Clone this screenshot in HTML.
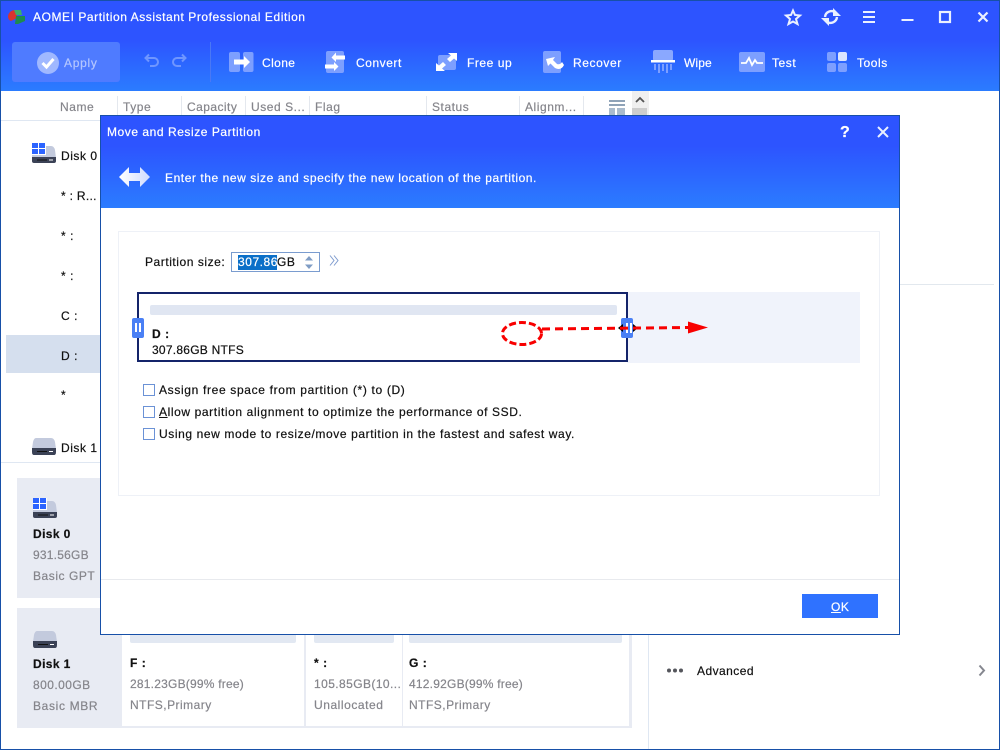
<!DOCTYPE html>
<html><head><meta charset="utf-8">
<style>
*{box-sizing:border-box}
html,body{margin:0;padding:0;width:1000px;height:750px;overflow:hidden;background:#fff}
body{font-family:"Liberation Sans",sans-serif;font-size:12px;position:relative}
.a{position:absolute}
.t{position:absolute;white-space:nowrap;line-height:14px;letter-spacing:.55px;color:#111;-webkit-text-stroke:.2px currentColor}
.w{color:#fff}
.g{color:#85858b}
.b{font-weight:bold}
.n{letter-spacing:.22px}
svg{position:absolute;overflow:visible}
</style></head><body>
<div class="a" style="left:0;top:0;width:1000px;height:750px;border:1px solid #1750a8;z-index:50;pointer-events:none"></div>
<div class="a" style="left:0;top:0;width:1000px;height:91px;background:linear-gradient(#2d54ff 0,#2d54ff 40px,#2b7cff 91px)"></div>

<svg style="left:8px;top:9px" width="18" height="16"><path d="M0 7Q1 2 6 1L9 2V9L3 12Q0 11 0 7Z" fill="#d8342f"/><path d="M6 1H13L14 6H8Z" fill="#3cae6a"/><path d="M8 7H17V12L10 15H7Z" fill="#1e8b4f"/></svg>
<div class="t w" style="left:33px;top:10px;letter-spacing:.56px">AOMEI Partition Assistant Professional Edition</div>

<svg style="left:785px;top:8px" width="215" height="20" fill="none" stroke="#eaf0ff" stroke-width="2">
<path d="M8 2.500L10 7L15 7.500L11 11L12.500 16L8 13.500L3.500 16L5 11L1 7.500L6 7Z"/>
<path d="M40 9A6.500 6.500 0 0 1 51 5M52 9A6.500 6.500 0 0 1 41 13" stroke-width="2.400"/>
<path d="M48 0V8H56ZM44 18V10H36Z" fill="#eaf0ff" stroke="none"/>
<path d="M78 4H90M78 9H90M78 14H90"/>
<path d="M116.500 12H128.500" stroke-width="2"/>
<rect x="155" y="4" width="10" height="10" stroke-width="2.200"/>
<path d="M193.500 4.500L202.500 13.500M202.500 4.500L193.500 13.500" stroke-width="2.200"/>
</svg>

<div class="a" style="left:12px;top:42px;width:108px;height:40px;background:#4f7bff;border-radius:3px"></div>
<svg style="left:37px;top:52px" width="22" height="22"><circle cx="11" cy="11" r="11" fill="#a0b8ff"/><path d="M5.500 11L9.500 15L16.500 7" fill="none" stroke="#fff" stroke-width="3"/></svg>
<div class="t" style="left:64px;top:56px;color:#b4c6ff;letter-spacing:.7px">Apply</div>
<svg style="left:144px;top:54px" width="44" height="14" fill="none" stroke="#6f96ff" stroke-width="2"><path d="M2 4H10A4 4 0 0 1 10 12H6M5 0.500L1.500 4L5 7.500"/><path d="M41 4H33A4 4 0 0 0 33 12H37M38 0.500L41.500 4L38 7.500"/></svg>
<div class="a" style="left:210px;top:42px;width:1px;height:40px;background:#4a78f5"></div>

<svg style="left:229px;top:52px" width="26" height="20"><rect width="11" height="20" rx="2" fill="#7d9fff"/><rect x="14" width="10.500" height="20" rx="2" fill="#7d9fff"/><path d="M5 7.500H15V4L21 10L15 16V12.500H5Z" fill="#fff"/></svg>
<div class="t w" style="left:262px;top:56px;letter-spacing:.4px">Clone</div>

<svg style="left:325px;top:51px" width="20" height="22"><rect x="1" width="18" height="22" rx="2" fill="#7d9fff"/><path d="M20 4.500H11V1.500L6.500 6.500L11 11V8.500H20ZM0 13.500H9V11L13.500 15.500L9 20V17.500H0Z" fill="#fff"/></svg>
<div class="t w" style="left:356px;top:56px">Convert</div>

<svg style="left:435px;top:52px" width="23" height="20"><rect x="3" y="3" width="18" height="15" rx="2" fill="#7d9fff"/><path d="M13 1H22V9L19 6.500L15 10L12 7L16 3.500ZM1 19V11L4 13.500L8 10L11 13L7 16.500L10 19Z" fill="#fff"/></svg>
<div class="t w" style="left:467px;top:56px">Free up</div>

<svg style="left:543px;top:51px" width="22" height="22"><rect width="18" height="22" rx="2" fill="#7d9fff"/><path d="M3 8L12 6L10 9L14 13Q17 14 19 11L21 14Q18 20 12 17L7.500 12.500L5 15Z" fill="#fff"/></svg>
<div class="t w" style="left:573px;top:56px;letter-spacing:.6px">Recover</div>

<svg style="left:651px;top:50px" width="24" height="24"><rect x="2" width="20" height="11" rx="2" fill="#8aa8ff"/><rect y="10" width="24" height="2.500" fill="#fff"/><path d="M3 14h2v6H3zM7 14h2v9H7zM11 14h2v7h-2zM15 14h2v9h-2zM19 14h2v6h-2z" fill="#7d9fff"/></svg>
<div class="t w" style="left:684px;top:56px;letter-spacing:.1px">Wipe</div>

<svg style="left:739px;top:52px" width="26" height="20"><rect width="26" height="20" rx="2" fill="#7d9fff"/><path d="M2 11H7L10 6L13 13L16 8L18 11H24" fill="none" stroke="#fff" stroke-width="1.800"/></svg>
<div class="t w" style="left:772px;top:56px">Test</div>

<svg style="left:827px;top:52px" width="20" height="20"><rect width="9" height="9" rx="2" fill="#7d9fff"/><rect x="11" width="9" height="9" rx="2" fill="#dbe5ff"/><rect y="11" width="9" height="9" rx="2" fill="#7d9fff"/><rect x="11" y="11" width="9" height="9" rx="2" fill="#7d9fff"/></svg>
<div class="t w" style="left:857px;top:56px">Tools</div>

<!-- table header -->
<div class="a" style="left:1px;top:120px;width:648px;height:1px;background:#dfe7f2"></div>
<div class="t g" style="left:60px;top:100px">Name</div>
<div class="t g" style="left:123px;top:100px">Type</div>
<div class="t g" style="left:187px;top:100px;letter-spacing:.45px">Capacity</div>
<div class="t g" style="left:251px;top:100px">Used S...</div>
<div class="t g" style="left:315px;top:100px">Flag</div>
<div class="t g" style="left:432px;top:100px">Status</div>
<div class="t g" style="left:525px;top:100px">Alignm...</div>
<div class="a" style="left:117px;top:96px;width:1px;height:22px;background:#e4e8ee"></div>
<div class="a" style="left:181px;top:96px;width:1px;height:22px;background:#e4e8ee"></div>
<div class="a" style="left:245px;top:96px;width:1px;height:22px;background:#e4e8ee"></div>
<div class="a" style="left:309px;top:96px;width:1px;height:22px;background:#e4e8ee"></div>
<div class="a" style="left:426px;top:96px;width:1px;height:22px;background:#e4e8ee"></div>
<div class="a" style="left:519px;top:96px;width:1px;height:22px;background:#e4e8ee"></div>
<div class="a" style="left:583px;top:96px;width:1px;height:22px;background:#e4e8ee"></div>
<svg style="left:609px;top:100px" width="16" height="15"><path d="M0 0h16v2H0zM0 4h16v2H0z" fill="#8fa3b8"/><path d="M0 8h6v7H0zM8 8h8v7H8z" fill="#a9bbcd"/></svg>
<div class="a" style="left:632px;top:91px;width:17px;height:24px;background:#f0f0f0"></div>
<div class="a" style="left:632px;top:108px;width:15px;height:10px;background:#cdcdcd"></div>
<svg style="left:636px;top:97px" width="8" height="6"><path d="M0 5L4 1L8 5" fill="none" stroke="#555" stroke-width="1.800"/></svg>

<!-- list -->
<svg style="left:32px;top:143px" width="24" height="20"><path d="M10 3H19Q22 3 23 7L24 15H0V7Z" fill="#c3cadd"/><path d="M0 14H24V18Q24 20 22 20H2Q0 20 0 18Z" fill="#3b4256"/><rect x="5" y="16.500" width="10" height="1" fill="#111"/><rect x="17" y="16.500" width="4" height="1" fill="#fff"/><rect x="0" y="0" width="14" height="12" fill="#fff"/><path d="M0 0h6v5H0zM7 0h6v5H7zM0 6h6v5H0zM7 6h6v5H7z" fill="#2c64ff"/></svg>
<div class="t" style="left:61px;top:149px">Disk 0</div>
<div class="t" style="left:61px;top:189px;letter-spacing:.3px">* : R...</div>
<div class="t" style="left:61px;top:229px">* :</div>
<div class="t" style="left:61px;top:269px">* :</div>
<div class="t" style="left:61px;top:309px">C :</div>
<div class="a" style="left:6px;top:335px;width:95px;height:38px;background:#d5dfee"></div>
<div class="t" style="left:61px;top:349px">D :</div>
<div class="t" style="left:61px;top:388px">*</div>
<svg style="left:32px;top:438px" width="24" height="17"><path d="M4 0H19Q22 0 23 4L24 11H0L1 4Q2 0 4 0Z" fill="#c3cadd"/><path d="M0 10H24V14Q24 17 22 17H2Q0 17 0 14Z" fill="#3b4256"/><rect x="5" y="13" width="10" height="1" fill="#111"/><rect x="17" y="13" width="4" height="1" fill="#fff"/></svg>
<div class="t" style="left:61px;top:441px">Disk 1</div>
<div class="a" style="left:1px;top:462px;width:648px;height:1px;background:#dfe7f2"></div>

<!-- disk panels -->
<div class="a" style="left:17px;top:478px;width:105px;height:120px;background:#e8ebf3"></div>
<svg style="left:33px;top:498px" width="24" height="20"><path d="M10 3H19Q22 3 23 7L24 15H0V7Z" fill="#c3cadd"/><path d="M0 14H24V18Q24 20 22 20H2Q0 20 0 18Z" fill="#3b4256"/><rect x="5" y="16.500" width="10" height="1" fill="#111"/><rect x="17" y="16.500" width="4" height="1" fill="#fff"/><rect x="0" y="0" width="14" height="12" fill="#fff"/><path d="M0 0h6v5H0zM7 0h6v5H7zM0 6h6v5H0zM7 6h6v5H7z" fill="#2c64ff"/></svg>
<div class="t b" style="left:33px;top:527px;letter-spacing:.4px">Disk 0</div>
<div class="t g n" style="left:33px;top:548px">931.56GB</div>
<div class="t g" style="left:33px;top:569px">Basic GPT</div>

<div class="a" style="left:17px;top:608px;width:615px;height:120px;background:#e8ebf3"></div>
<div class="a" style="left:122px;top:608px;width:182px;height:118px;background:#fff"></div>
<div class="a" style="left:306px;top:608px;width:96px;height:118px;background:#fff"></div>
<div class="a" style="left:403px;top:608px;width:226px;height:118px;background:#fff"></div>
<div class="a" style="left:130px;top:630px;width:166px;height:13px;background:#e2e8f2;border-radius:2px"></div>
<div class="a" style="left:314px;top:630px;width:80px;height:13px;background:#e2e8f2;border-radius:2px"></div>
<div class="a" style="left:409px;top:630px;width:213px;height:13px;background:#e2e8f2;border-radius:2px"></div>
<svg style="left:33px;top:631px" width="24" height="17"><path d="M4 0H19Q22 0 23 4L24 11H0L1 4Q2 0 4 0Z" fill="#c3cadd"/><path d="M0 10H24V14Q24 17 22 17H2Q0 17 0 14Z" fill="#3b4256"/><rect x="5" y="13" width="10" height="1" fill="#111"/><rect x="17" y="13" width="4" height="1" fill="#fff"/></svg>
<div class="t b" style="left:33px;top:657px;letter-spacing:.4px">Disk 1</div>
<div class="t g" style="left:33px;top:678px;letter-spacing:.45px">800.00GB</div>
<div class="t g" style="left:33px;top:699px;letter-spacing:.65px">Basic MBR</div>
<div class="t b" style="left:130px;top:656px">F :</div>
<div class="t g n" style="left:130px;top:677px">281.23GB(99% free)</div>
<div class="t g" style="left:130px;top:698px;letter-spacing:.48px">NTFS,Primary</div>
<div class="t b" style="left:314px;top:656px">* :</div>
<div class="t g" style="left:314px;top:677px;letter-spacing:.42px">105.85GB(10...</div>
<div class="t g" style="left:314px;top:698px">Unallocated</div>
<div class="t b" style="left:409px;top:656px">G :</div>
<div class="t g n" style="left:409px;top:677px">412.92GB(99% free)</div>
<div class="t g" style="left:409px;top:698px;letter-spacing:.48px">NTFS,Primary</div>

<!-- right panel -->
<div class="a" style="left:648px;top:463px;width:1px;height:287px;background:#dfe7f2"></div>
<div class="a" style="left:900px;top:284px;width:94px;height:1px;background:#e2e8ee"></div>
<svg style="left:667px;top:668px" width="16" height="5" fill="#55565c"><circle cx="2" cy="2.500" r="2"/><circle cx="8" cy="2.500" r="2"/><circle cx="14" cy="2.500" r="2"/></svg>
<div class="t" style="left:697px;top:664px;letter-spacing:.45px">Advanced</div>
<svg style="left:978px;top:665px" width="8" height="11"><path d="M1.500 0.500L6 5.500L1.500 10.500" fill="none" stroke="#85878f" stroke-width="2"/></svg>

<!-- dialog -->
<div class="a" style="left:100px;top:115px;width:800px;height:520px;background:#fff;border:1px solid #1750a8;z-index:10">
<div class="a" style="left:0;top:0;width:798px;height:92px;background:linear-gradient(#2d54ff 0,#2d54ff 30px,#2b7cff 92px)"></div>
</div>
<div class="a" style="left:0;top:0;width:1000px;height:750px;z-index:11">
<div class="t w" style="left:107px;top:125px">Move and Resize Partition</div>
<div class="t w" style="left:840px;top:126px;font-size:16px;letter-spacing:0;font-weight:bold">?</div>
<svg style="left:878px;top:127px" width="10" height="10"><path d="M0 0L10 10M10 0L0 10" stroke="#eaf0ff" stroke-width="2"/></svg>
<svg style="left:119px;top:167px" width="32" height="20"><defs><linearGradient id="ar" x1="0" x2="1" y1="0" y2="0"><stop offset="0" stop-color="#fff"/><stop offset="1" stop-color="#cfdcff"/></linearGradient></defs><path d="M0 10L10 0V6H21V0L31 10L21 20V14H10V20Z" fill="url(#ar)"/></svg>
<div class="t w" style="left:165px;top:171px;letter-spacing:.56px">Enter the new size and specify the new location of the partition.</div>

<div class="a" style="left:118px;top:231px;width:762px;height:265px;border:1px solid #eef1f7"></div>
<div class="t" style="left:145px;top:255px">Partition size:</div>
<div class="a" style="left:231px;top:252px;width:89px;height:20px;border:1px solid #7a9ccf;background:#fff"></div>
<div class="a" style="left:238px;top:255px;width:39px;height:15px;background:#0a6fc8"></div>
<div class="t" style="left:238px;top:255px;color:#fff">307.86</div>
<div class="t" style="left:277px;top:255px">GB</div>
<svg style="left:304px;top:256px" width="10" height="13" fill="#7f9cc4"><path d="M5 0L9 4.500H1ZM1 8.500H9L5 13Z"/></svg>
<svg style="left:329px;top:255px" width="10" height="11" fill="none" stroke="#7f9ccf"><path d="M1 0.500L5 5.500L1 10.500M5 0.500L9 5.500L5 10.500"/></svg>

<div class="a" style="left:627px;top:292px;width:233px;height:71px;background:#f0f3fb"></div>
<div class="a" style="left:137px;top:292px;width:491px;height:70px;border:2px solid #14246a;background:#fff"></div>
<div class="a" style="left:150px;top:305px;width:467px;height:10px;background:#e0e6f2;border-radius:2px"></div>
<div class="t b" style="left:152px;top:327px">D :</div>
<div class="t" style="left:152px;top:343px;letter-spacing:.25px">307.86GB NTFS</div>
<div class="a" style="left:132px;top:318px;width:12px;height:20px;background:#4a80f5;border-radius:2px"></div>
<svg style="left:135px;top:323px" width="6" height="9" fill="#fff"><path d="M0 0h2v9H0zM4 0h2v9H4z"/></svg>
<div class="a" style="left:621px;top:318px;width:12px;height:20px;background:#4a80f5;border-radius:2px"></div>
<svg style="left:617px;top:321px" width="24" height="14"><path d="M1 7L6 3V11ZM21 7L16 3V11Z" fill="#000"/><path d="M9 2h2v10H9zM13 2h2v10h-2z" fill="#fff"/></svg>
<svg style="left:500px;top:320px" width="210" height="28" fill="none" stroke="#f80000" stroke-width="3">
<ellipse cx="22" cy="13.500" rx="19.500" ry="11" stroke-dasharray="7 3"/>
<path d="M42 9L190 7.500" stroke-dasharray="8 5"/>
<path d="M188 1.500L208 7.500L188 13.500Z" fill="#f80000" stroke="none"/>
</svg>

<div class="a" style="left:143px;top:384px;width:12px;height:12px;border:1px solid #6b92d6"></div>
<div class="t" style="left:159px;top:383px;letter-spacing:.66px">Assign free space from partition (*) to (D)</div>
<div class="a" style="left:143px;top:406px;width:12px;height:12px;border:1px solid #6b92d6"></div>
<div class="t" style="left:159px;top:405px;letter-spacing:.6px"><u>A</u>llow partition alignment to optimize the performance of SSD.</div>
<div class="a" style="left:143px;top:428px;width:12px;height:12px;border:1px solid #6b92d6"></div>
<div class="t" style="left:159px;top:427px;letter-spacing:.6px">Using new mode to resize/move partition in the fastest and safest way.</div>

<div class="a" style="left:101px;top:579px;width:798px;height:1px;background:#e8eaee"></div>
<div class="a" style="left:802px;top:594px;width:76px;height:24px;background:#2f72ff"></div>
<div class="t w" style="left:831px;top:600px"><u>O</u>K</div>
</div>
</body></html>
